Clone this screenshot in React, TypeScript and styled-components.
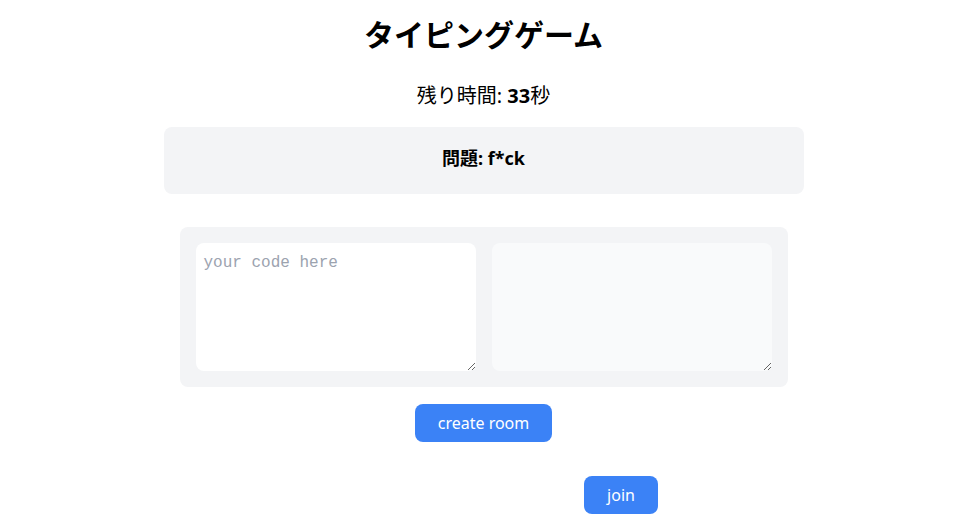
import styled, { createGlobalStyle } from "styled-components";

const GlobalStyle = createGlobalStyle`
  body {
    margin: 0;
    background: #ffffff;
    font-family: "Noto Sans", "Noto Sans CJK JP", sans-serif;
    color: #000000;
  }
`;

const Page = styled.div`
  width: 967px;
  display: flex;
  flex-direction: column;
  align-items: center;
  padding-top: 15px;
`;

const Title = styled.h1`
  margin: 0;
  font-size: 30px;
  line-height: 36px;
  font-weight: 700;
  font-family: "Noto Sans CJK JP", sans-serif;
`;

const Timer = styled.p`
  margin: 31px 0 0;
  font-size: 20px;
  line-height: 28px;
  font-family: "Noto Sans", "Noto Sans CJK JP", sans-serif;

  b {
    font-weight: 700;
  }
`;

const QuestionBox = styled.div`
  margin-top: 17px;
  width: 640px;
  box-sizing: border-box;
  padding: 18px 0 22px;
  background: #f3f4f6;
  border-radius: 8px;
  text-align: center;
  font-size: 18px;
  line-height: 27px;
  font-weight: 700;
`;

const Editors = styled.div`
  margin-top: 33px;
  width: 608px;
  box-sizing: border-box;
  padding: 16px;
  background: #f3f4f6;
  border-radius: 8px;
  display: grid;
  grid-template-columns: 1fr 1fr;
  gap: 16px;
`;

const CodeArea = styled.textarea<{ $muted?: boolean }>`
  display: block;
  height: 128px;
  box-sizing: border-box;
  padding: 8px;
  border: none;
  border-radius: 8px;
  resize: vertical;
  outline: none;
  background: ${(p) => (p.$muted ? "#f9fafb" : "#ffffff")};
  font-family: "Liberation Mono", monospace;
  font-size: 16px;
  line-height: 24px;

  &::placeholder {
    color: #9ca3af;
  }
`;

const Button = styled.button`
  background: #3b82f6;
  color: #ffffff;
  border: none;
  border-radius: 8px;
  padding: 0 23px;
  height: 38px;
  font-family: "Noto Sans", sans-serif;
  font-size: 16px;
  cursor: pointer;
`;

const CreateRow = styled.div`
  margin-top: 17px;
  display: flex;
  justify-content: center;
`;

const JoinRow = styled.div`
  margin-top: 34px;
  display: flex;
  justify-content: center;
  width: 100%;
  padding-left: 275px;
  box-sizing: border-box;
`;

function App() {
  return (
    <>
      <GlobalStyle />
      <Page>
        <Title>タイピングゲーム</Title>
        <Timer>
          残り時間: <b>33</b>秒
        </Timer>
        <QuestionBox>問題: f*ck</QuestionBox>
        <Editors>
          <CodeArea placeholder="your code here" />
          <CodeArea $muted readOnly />
        </Editors>
        <CreateRow>
          <Button>create room</Button>
        </CreateRow>
        <JoinRow>
          <Button>join</Button>
        </JoinRow>
      </Page>
    </>
  );
}

export default App;
